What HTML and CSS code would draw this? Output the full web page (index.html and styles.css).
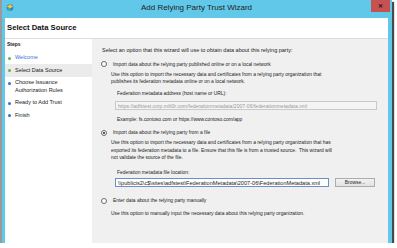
FILE: index.html
```html
<!DOCTYPE html>
<html lang="en">
<head>
  <meta charset="UTF-8">
  <meta name="viewport" content="width=device-width, initial-scale=1.0">
  <title>Add Relying Party Trust Wizard</title>
  <link rel="stylesheet" href="styles.css">
</head>
<body>
<div class="window">
  <div class="titlebar">
    <svg class="app-icon" viewBox="0 0 10 10" width="8" height="9">
      <circle cx="5" cy="5" r="4.2" fill="#2f7fd0"/>
      <path d="M1 4 L5 1 L9 4 L5 6 Z" fill="#f2c53d"/>
      <path d="M2 6 L5 6 L6 9 L3 8.5 Z" fill="#5cb85c"/>
    </svg>
    <span class="title">Add Relying Party Trust Wizard</span>
    <div class="close-cell"><div class="close">&#x2715;</div></div>
  </div>
  <div class="client">
    <div class="page-header">Select Data Source</div>
    <div class="wizard">
      <div class="steps">
        <div class="steps-title">Steps</div>
        <ul class="step-list">
          <li class="step done link"><span class="dot"></span><span>Welcome</span></li>
          <li class="step done current"><span class="dot"></span><span>Select Data Source</span></li>
          <li class="step"><span class="dot"></span><span>Choose Issuance<br>Authorization Rules</span></li>
          <li class="step"><span class="dot"></span><span>Ready to Add Trust</span></li>
          <li class="step"><span class="dot"></span><span>Finish</span></li>
        </ul>
      </div>
      <div class="content">
        <div class="intro">Select an option that this wizard will use to obtain data about this relying party:</div>

        <div class="option first"><span class="radio"></span><span>Import data about the relying party published online or on a local network</span></div>
        <div class="desc">Use this option to import the necessary data and certificates from a relying party organization that<br>publishes its federation metadata online or on a local network.</div>
        <div class="field-label">Federation metadata address (host name or URL):</div>
        <div class="text-input disabled">https://adfstest.corp.milt0r.com/federationmetadata/2007-06/federationmetadata.xml</div>
        <div class="example">Example: fs.contoso.com or https://www.contoso.com/app</div>

        <div class="option second"><span class="radio checked"></span><span>Import data about the relying party from a file</span></div>
        <div class="desc">Use this option to import the necessary data and certificates from a relying party organization that has<br>exported its federation metadata to a file. Ensure that this file is from a trusted source.&nbsp; This wizard will<br>not validate the source of the file.</div>
        <div class="field-label file-label">Federation metadata file location:</div>
        <div class="file-row">
          <div class="text-input active">\\publicis2\c$\sites\adfstest\FederationMetadata\2007-06\FederationMetadata.xml</div>
          <div class="button">Browse...</div>
        </div>

        <div class="option third"><span class="radio"></span><span>Enter data about the relying party manually</span></div>
        <div class="desc manual">Use this option to manually input the necessary data about this relying party organization.</div>
      </div>
    </div>
  </div>
</div>
</body>
</html>
```

FILE: styles.css
```css
body {
  margin: 0;
  background: #fff;
  font-family: "Liberation Sans", Arial, sans-serif;
  color: #222;
}
.window {
  margin-left: 2px;
  width: 390px;
  height: 243px;
  box-sizing: border-box;
  background: #62c8e9;
  padding: 0 4px 0 3px;
  display: flex;
  flex-direction: column;
  box-shadow: -2px 0 0 #9a9a9a, 2px 2px 1px #4a4a4a;
}
.titlebar {
  height: 18px;
  display: grid;
  grid-template-columns: 1fr auto 1fr;
  align-items: start;
}
.app-icon {
  margin: 3px 0 0 1px;
}
.title {
  font-size: 8px;
  line-height: 16px;
  color: #1e1e1e;
}
.close-cell {
  display: flex;
  justify-content: flex-end;
}
.close {
  width: 19px;
  height: 12px;
  margin-right: -2px;
  background: #c75050;
  color: #1a1a1a;
  font-size: 6px;
  font-weight: bold;
  line-height: 12px;
  text-align: center;
}
.client {
  flex: 1;
  background: #fff;
  display: flex;
  flex-direction: column;
}
.page-header {
  height: 20px;
  line-height: 20px;
  padding-left: 2px;
  font-size: 7.7px;
  font-weight: bold;
  color: #111;
  border-bottom: 1px solid #dcdcdc;
}
.wizard {
  flex: 1;
  display: flex;
}
.steps {
  width: 87px;
  background: #fff;
  padding-top: 2px;
}
.steps-title {
  font-size: 5px;
  font-weight: bold;
  line-height: 7px;
  padding-left: 2px;
}
.step-list {
  list-style: none;
  margin: 3.75px 0 0;
  padding: 0;
}
.step {
  display: flex;
  align-items: flex-start;
  padding: 2.5px 0 2.5px 3px;
  font-size: 5.5px;
  line-height: 7.5px;
}
.step .dot {
  width: 3px;
  height: 3px;
  border-radius: 50%;
  background: #2a6fe0;
  margin: 2.25px 4px 0 0;
  flex: none;
}
.step.done .dot {
  background: #58b847;
}
.step.link {
  color: #3a73d8;
}
.step.current {
  background: #ebebeb;
}
.content {
  flex: 1;
  min-width: 0;
  background: #f0f0f0;
  padding: 8px 11px 0 10px;
  font-size: 4.9px;
  line-height: 7.5px;
  white-space: nowrap;
}
.intro {
  font-size: 5.5px;
}
.option {
  display: flex;
  align-items: center;
  margin-left: -1px;
}
.option.first { margin-top: 6px; }
.option.second { margin-top: 5.5px; }
.option.third { margin-top: 10px; }
.radio {
  width: 4px;
  height: 4px;
  border: 0.6px solid #6a6a6a;
  border-radius: 50%;
  background: #fff;
  margin-right: 6px;
  display: flex;
  align-items: center;
  justify-content: center;
}
.radio.checked::after {
  content: "";
  width: 2.4px;
  height: 2.4px;
  border-radius: 50%;
  background: #222;
}
.desc {
  margin: 2.5px 0 0 9px;
}
.desc.manual {
  margin-top: 5.5px;
}
.field-label {
  margin: 4px 0 0 15px;
}
.field-label.file-label {
  margin-top: 7.5px;
}
.text-input {
  height: 9px;
  box-sizing: border-box;
  border: 0.6px solid #c9c9c9;
  background: #fff;
  padding-left: 2px;
  font-size: 5.1px;
  line-height: 8px;
  overflow: hidden;
}
.text-input.disabled {
  margin: 4.25px 0 0 13px;
  width: 262px;
  background: #f4f4f4;
  color: #9a9a9a;
}
.text-input.active {
  width: 214px;
  border-color: #6d8fc9;
  color: #222;
  font-size: 5.6px;
}
.example {
  margin: 6px 0 0 15px;
}
.file-row {
  display: flex;
  gap: 6px;
  margin: 1.5px 0 0 13px;
}
.button {
  width: 40px;
  height: 9px;
  box-sizing: border-box;
  border: 0.6px solid #acacac;
  background: linear-gradient(#f2f2f2, #e2e2e2);
  text-align: center;
  line-height: 8px;
}
```
